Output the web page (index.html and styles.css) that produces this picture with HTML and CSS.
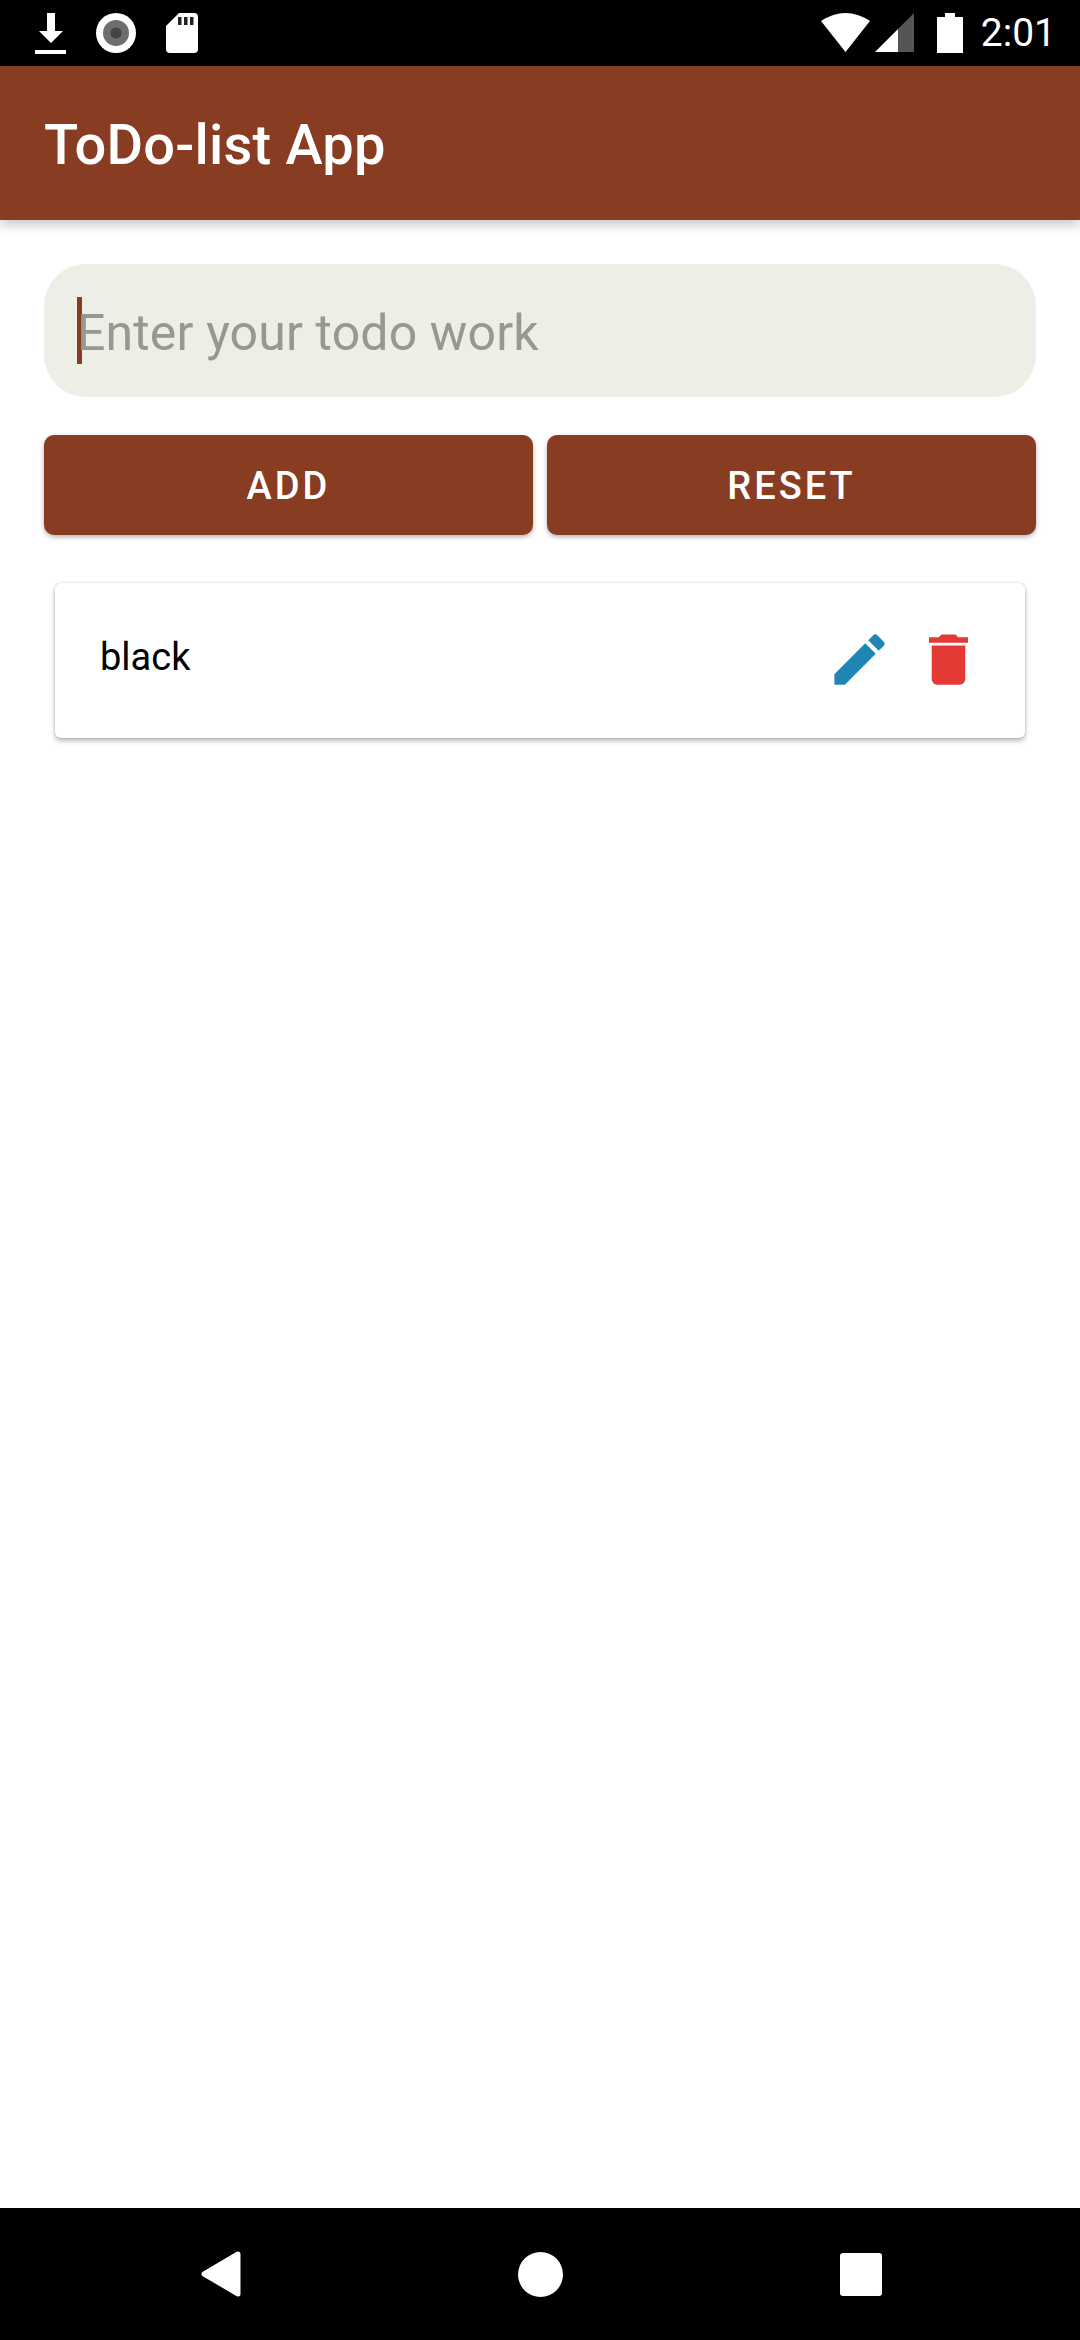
FILE: index.html
```html
<!DOCTYPE html>
<html lang="en">
<head>
    <meta charset="UTF-8">
    <meta name="viewport" content="width=device-width, initial-scale=1.0">
    <title>ToDo-list App</title>
    <link rel="stylesheet" href="styles.css">
</head>
<body>
    <div class="screen">
        <div class="status-bar">
            <div class="status-left">
                <svg width="31" height="41" viewBox="0 0 31 41" fill="#fff">
                    <path d="M12 0h8v18h8L16 30 4 18h8z"/>
                    <rect y="37" width="31" height="4"/>
                </svg>
                <svg width="40" height="40" viewBox="0 0 40 40">
                    <circle cx="20" cy="20" r="20" fill="#fff"/>
                    <circle cx="20" cy="20" r="13" fill="#6e6e6e"/>
                    <circle cx="20" cy="20" r="5.5" fill="#444"/>
                </svg>
                <svg width="32" height="40" viewBox="0 0 32 40">
                    <path fill="#fff" d="M13 0h15a4 4 0 0 1 4 4v32a4 4 0 0 1-4 4H4a4 4 0 0 1-4-4V13z"/>
                    <path fill="#222" d="M12 4h3.5v8H12zM18 4h3.5v8H18zM24 4h3.5v8H24z"/>
                </svg>
            </div>
            <div class="status-right">
                <svg class="wifi" width="49" height="39" viewBox="0 0 49 39" fill="#fff">
                    <path d="M0 8Q24.500-8 49 8L24.500 39z"/>
                </svg>
                <svg class="signal" width="39" height="39" viewBox="0 0 39 39">
                    <path fill="#555" d="M39 0v39H23V16z"/>
                    <path fill="#fff" d="M0 39l23-23v23z"/>
                </svg>
                <svg class="battery" width="26" height="40" viewBox="0 0 26 40" fill="#fff">
                    <path d="M8 0h10v4h8v36H0V4h8z"/>
                </svg>
                <span class="clock">2:01</span>
            </div>
        </div>

        <header class="app-bar">ToDo-list App</header>

        <main class="content">
            <div class="todo-input">
                <span class="caret"></span>
                <span class="placeholder">Enter your todo work</span>
            </div>

            <div class="actions">
                <button class="btn">ADD</button>
                <button class="btn">RESET</button>
            </div>

            <div class="todo-card">
                <span class="todo-text">black</span>
                <div class="todo-icons">
                    <svg width="67" height="67" viewBox="0 0 24 24" fill="#1e85b5">
                        <path d="M3 17.250V21h3.750L17.810 9.940l-3.750-3.750L3 17.250zM20.710 7.040c.39-.39.39-1.020 0-1.410l-2.340-2.340c-.39-.39-1.020-.39-1.410 0l-1.830 1.830 3.750 3.750 1.830-1.830z"/>
                    </svg>
                    <svg width="67" height="67" viewBox="0 0 24 24" fill="#e53935">
                        <path d="M6 19c0 1.100.9 2 2 2h8c1.100 0 2-.9 2-2V7H6v12zM19 4h-3.500l-1-1h-5l-1 1H5v2h14V4z"/>
                    </svg>
                </div>
            </div>
        </main>

        <nav class="nav-bar">
            <svg width="40" height="46" viewBox="0 0 40 46" fill="#fff" stroke="#fff" stroke-width="5" stroke-linejoin="round">
                <path d="M3 23L37 3v40z"/>
            </svg>
            <svg width="45" height="45" viewBox="0 0 45 45" fill="#fff">
                <circle cx="22.500" cy="22.500" r="22.500"/>
            </svg>
            <svg width="42" height="43" viewBox="0 0 42 43" fill="#fff">
                <rect width="42" height="43" rx="3"/>
            </svg>
        </nav>
    </div>
</body>
</html>
```
FILE: styles.css
```css
* {
    box-sizing: border-box;
}

body {
    margin: 0;
    background: #fff;
    font-family: Roboto, "Liberation Sans", sans-serif;
}

.screen {
    display: flex;
    flex-direction: column;
    width: 1080px;
    height: 2340px;
    overflow: hidden;
}

.status-bar {
    display: flex;
    justify-content: space-between;
    flex: none;
    height: 66px;
    padding: 13px 24px 0 35px;
    background: #000;
}

.status-left {
    display: flex;
    align-items: flex-start;
    gap: 30px;
}

.status-right {
    display: flex;
    align-items: flex-start;
}

.signal {
    margin-left: 5px;
}

.battery {
    margin-left: 23px;
}

.clock {
    margin-left: 18px;
    color: #fff;
    font-size: 39px;
    line-height: 40px;
}

.app-bar {
    flex: none;
    position: relative;
    height: 154px;
    padding-left: 44px;
    background: #883d23;
    box-shadow: 0 4px 12px rgba(0, 0, 0, 0.25);
    color: #fff;
    font-size: 56px;
    font-weight: 500;
    letter-spacing: 0.2px;
    line-height: 158px;
}

.content {
    flex: 1;
    padding: 44px 44px 0;
}

.todo-input {
    display: flex;
    align-items: center;
    height: 133px;
    padding-left: 33px;
    border-radius: 42px;
    background: #edeee6;
}

.caret {
    flex: none;
    width: 5px;
    height: 67px;
    margin-right: -5px;
    background: #883d23;
}

.placeholder {
    color: #979890;
    font-size: 50px;
    letter-spacing: 0.15px;
    position: relative;
    top: 2px;
}

.actions {
    display: flex;
    gap: 14px;
    margin-top: 38px;
}

.btn {
    flex: 1;
    height: 100px;
    padding-top: 3px;
    border: none;
    border-radius: 10px;
    background: #883d23;
    box-shadow: 0 2px 5px rgba(0, 0, 0, 0.3);
    color: #fff;
    font-family: inherit;
    font-size: 38px;
    font-weight: 500;
    letter-spacing: 3px;
}

.todo-card {
    display: flex;
    align-items: center;
    justify-content: space-between;
    height: 155px;
    margin: 48px 11px 0;
    padding: 0 43px 0 45px;
    border-radius: 6px;
    background: #fff;
    box-shadow: 0 3px 5px rgba(0, 0, 0, 0.28), 0 0 2px rgba(0, 0, 0, 0.2);
}

.todo-text {
    color: #000;
    font-size: 38px;
    position: relative;
    top: -4px;
}

.todo-icons {
    display: flex;
    gap: 22px;
    position: relative;
    top: -1px;
}

.nav-bar {
    display: flex;
    align-items: center;
    flex: none;
    gap: 277px;
    height: 132px;
    padding-left: 201px;
    background: #000;
}
```
